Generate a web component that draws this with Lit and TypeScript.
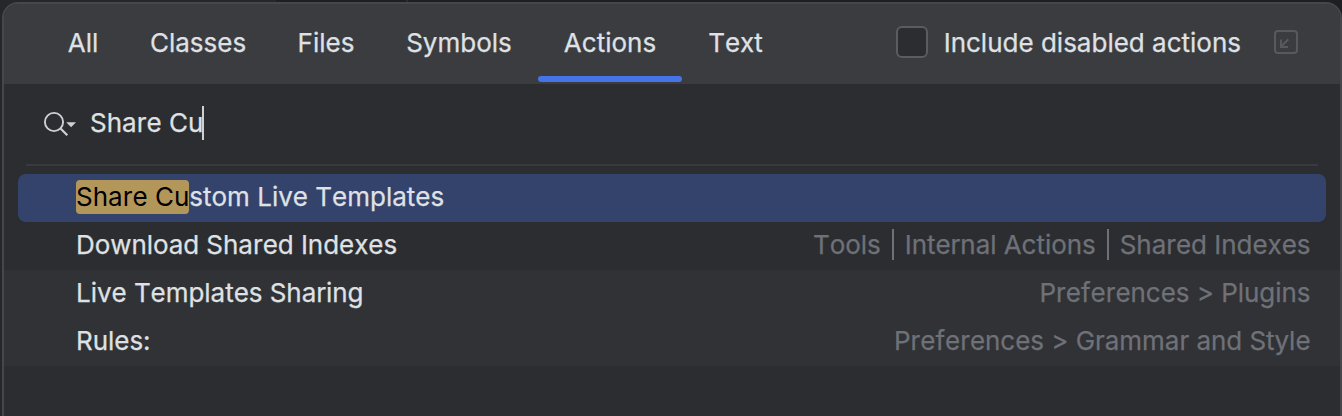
import { LitElement, html, css } from "lit";
import { customElement, property } from "lit/decorators.js";
import { classMap } from "lit/directives/class-map.js";
import { styleMap } from "lit/directives/style-map.js";

interface Tab {
  label: string;
  width: number;
  active?: boolean;
}

interface Result {
  match?: string;
  label: string;
  path: string[];
  selected?: boolean;
  tinted?: boolean;
}

const TABS: Tab[] = [
  { label: "All", width: 82 },
  { label: "Classes", width: 148 },
  { label: "Files", width: 108 },
  { label: "Symbols", width: 158 },
  { label: "Actions", width: 144, active: true },
  { label: "Text", width: 107 },
];

const RESULTS: Result[] = [
  { match: "Share Cu", label: "stom Live Templates", path: [], selected: true },
  { label: "Download Shared Indexes", path: ["Tools", "Internal Actions", "Shared Indexes"] },
  { label: "Live Templates Sharing", path: ["Preferences > Plugins"], tinted: true },
  { label: "Rules:", path: ["Preferences > Grammar and Style"], tinted: true },
];

@customElement("search-tabs")
class SearchTabs extends LitElement {
  static styles = css`
    :host { display: flex; box-sizing: border-box; height: 80px; padding-left: 38px; background: #3b3c40; }
    .tab { display: flex; flex-direction: column; flex: none; align-items: center; height: 80px; box-sizing: border-box; padding-top: 23px; line-height: 32px; }
    .line { width: 100%; height: 6px; margin-top: 17px; border-radius: 3px; background: #4673e8; }
    .options { display: flex; align-items: center; margin-left: auto; padding-right: 42px; height: 76px; }
    .check { box-sizing: border-box; width: 32px; height: 32px; border: 2px solid #5b5c5f; border-radius: 6px; background: #2c2d30; }
    .option { margin: 2px 33px 0 16px; line-height: 32px; white-space: nowrap; }
    .open { display: block; }
  `;

  render() {
    return html`
      ${TABS.map((t) => html`
        <div class="tab" style=${styleMap({ width: `${t.width}px` })}>
          <span>${t.label}</span>
          ${t.active ? html`<div class="line"></div>` : null}
        </div>`)}
      <div class="options">
        <div class="check"></div>
        <span class="option">Include disabled actions</span>
        <svg class="open" width="24" height="24" viewBox="0 0 24 24" fill="none" stroke="#58595b" stroke-width="2">
          <rect x="1" y="1" width="22" height="22" rx="3" />
          <path d="M14.3 9.3 7.3 16.3M7 9.5V17H14" />
        </svg>
      </div>`;
  }
}

@customElement("search-field")
class SearchField extends LitElement {
  static styles = css`
    :host { display: flex; align-items: flex-start; box-sizing: border-box; height: 80px; padding: 22px 0 0 38px; }
    .icon { display: block; flex: none; margin-right: 9px; }
    .query { line-height: 34px; white-space: pre; }
    .caret { width: 2px; height: 34px; margin-left: -1px; background: #ced0d6; }
  `;

  render() {
    return html`
      <svg class="icon" width="39" height="34" viewBox="0 0 39 34" fill="none">
        <circle cx="12" cy="16" r="9.1" stroke="#ced0d6" stroke-width="1.9" />
        <path d="M18.5 22.5 25.3 29.3" stroke="#ced0d6" stroke-width="2.2" />
        <path d="M24.2 16.2H34L29.1 21.2Z" fill="#ced0d6" />
      </svg>
      <span class="query">Share Cu</span><span class="caret"></span>`;
  }
}

@customElement("result-row")
class ResultRow extends LitElement {
  @property({ attribute: false }) item!: Result;

  static styles = css`
    :host { display: block; }
    .row { display: flex; align-items: center; box-sizing: border-box; height: 48px; padding: 0 29.5px 2px 72px; letter-spacing: -0.04px; }
    .tinted { background: #313236; }
    .selected { margin: 0 14px; padding: 0 16px 2px 58px; border-radius: 8px; background: #34436b; letter-spacing: 0; }
    .label { display: flex; line-height: 34px; white-space: pre; }
    .match { color: #000; background: #b3965a; border-radius: 4px; -webkit-text-stroke: 0; }
    .path { display: flex; align-items: center; margin-left: auto; line-height: 34px; color: #6f7178; white-space: nowrap; }
    .bar { width: 2px; height: 31px; margin: 0 11px 1px; background: #6f7178; }
  `;

  render() {
    const { match, label, path, selected, tinted } = this.item;
    return html`
      <div class=${classMap({ row: true, selected: !!selected, tinted: !!tinted })}>
        <div class="label">${match ? html`<span class="match">${match}</span>` : null}<span>${label}</span></div>
        <div class="path">
          ${path.map((p, i) => html`${i ? html`<span class="bar"></span>` : null}<span>${p}</span>`)}
        </div>
      </div>`;
  }
}

@customElement("app-root")
class AppRoot extends LitElement {
  static styles = css`
    :host { display: block; box-sizing: border-box; height: 416px; padding: 2px 0 0 2px; overflow: hidden;
      background: linear-gradient(90deg, #26272a 0 276px, #1e1f22 276px 406px, #2b2c2f 406px 408px, #1e1f22 408px);
      color: #dfe1e5; font: 400 26px Inter, "Liberation Sans", sans-serif; font-kerning: none; -webkit-text-stroke: 0.25px currentColor; }
    .panel { box-sizing: border-box; height: 432px; border: 2px solid #46474b; border-radius: 16px; background: #2c2d30; overflow: hidden; }
    .rule { height: 2px; margin: 0 22px 8px; background: #393a3e; }
  `;

  render() {
    return html`
      <div class="panel">
        <search-tabs></search-tabs>
        <search-field></search-field>
        <div class="rule"></div>
        ${RESULTS.map((r) => html`<result-row .item=${r}></result-row>`)}
      </div>`;
  }
}
